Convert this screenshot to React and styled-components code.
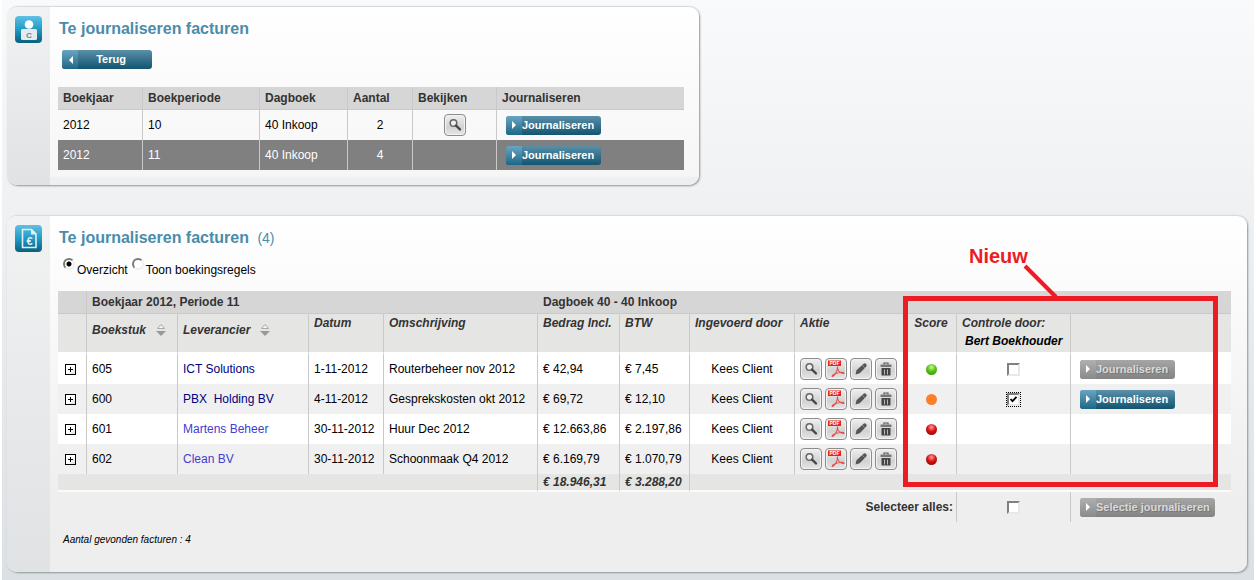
import React from "react";
import styled, { createGlobalStyle, css } from "styled-components";

const GlobalStyle = createGlobalStyle`
  html {
    min-height: 100%;
    background: #fff;
  }

  body {
    margin: 0 2px;
    min-height: 100vh;
    background: linear-gradient(#f9fafb, #eff1f3 35%, #dbe0e4);
    font-family: "Liberation Sans", Arial, sans-serif;
    font-size: 12px;
    line-height: 16px;
    color: #000;
  }
`

const Page = styled.main`
  display: flex;
  flex-direction: column;
  gap: 30px;
  padding: 6px 7px 7px 5px;
`

const Panel = styled.section`
  display: flex;
  box-sizing: border-box;
  max-width: ${props => props.$narrow ? '692px' : 'none'};
  border-top: 1px solid #d9dcdc;
  border-radius: 10px;
  background: ${props => props.$narrow ? 'linear-gradient(#fff, #f6f6f6 95%, #efefef 96%)' : 'linear-gradient(#fff, #fbfbfb 20%, #eee 80%)'};
  box-shadow: 1px 1px 2px #8f9496;
  overflow: hidden;
`

const Side = styled.div`
  flex: none;
  width: 43px;
  box-sizing: border-box;
  padding: 9px 8px;
  background: linear-gradient(#f1f3f3, #e6e8e9 60%, #e0e2e4);

  svg {
    display: block;
  }
`

const Body = styled.div`
  flex: 1;
  min-width: 0;
  padding: ${props => props.$narrow ? '12px 15px 15px 8px' : '12px 16px 24px 8px'};
`

const Title = styled.h2`
  margin: 0 1px;
  font-size: 16px;
  line-height: 20px;
  color: #4a8cab;

  span {
    margin-left: 4px;
    font-size: 14px;
    font-weight: normal;
  }
`

const Toolbar = styled.div`
  display: flex;
  padding: 11px 4px 18px;
`

const Options = styled.div`
  display: flex;
  gap: 4px;
  padding: 10px 5px 13px;

  label {
    display: flex;
    gap: 2px;
  }

  span {
    padding-top: 4px;
  }
`

const Radio = styled.input`
  appearance: none;
  width: 12px;
  height: 12px;
  margin: 0;
  border: 2px solid;
  border-color: #7a7a7a #f0f0f0 #f0f0f0 #7a7a7a;
  border-radius: 50%;
  background: #fff;

  &:checked {
    background: radial-gradient(circle, #000 2px, #fff 3px);
  }
`

const Check = styled.input`
  appearance: none;
  display: block;
  box-sizing: border-box;
  width: 13px;
  height: 13px;
  margin: 0 auto;
  border: 2px solid;
  border-color: #808080 #e8e8e8 #e8e8e8 #808080;
  background: #fff;

  &:checked {
    outline: 1px dotted #000;
    background: #fff url("data:image/svg+xml,%3Csvg xmlns='http://www.w3.org/2000/svg' viewBox='0 0 9 9'%3E%3Cpath d='M1.5 4l2 2.2 4-4.4' fill='none' stroke='%23000' stroke-width='1.8'/%3E%3C/svg%3E");
  }
`

const Button = styled.button`
  display: flex;
  align-items: center;
  width: ${props => props.$width};
  height: 19px;
  padding: 0;
  border: 0;
  border-radius: 3px;
  overflow: hidden;
  background: linear-gradient(#5a8fa9, #13546f);
  color: #fff;
  font: bold 11px/19px "Liberation Sans", Arial, sans-serif;

  ${props => props.disabled && css`
    background: linear-gradient(#a6a6a6, #838383);
    color: #d9d9d9;
    text-shadow: 1px 1px 0 #777;
  `}
`

const Arrow = styled.span`
  display: flex;
  flex: none;
  align-items: center;
  justify-content: center;
  width: 16px;
  height: 19px;
  background: linear-gradient(#6aa5c3, #1c6886);

  ${Button}:disabled & {
    background: linear-gradient(#b0b0b0, #8a8a8a);
  }
`

const Label = styled.span`
  flex: 1;
  text-align: ${props => props.$center ? 'center' : 'left'};
  padding-right: ${props => props.$center ? '8px' : '0'};
  white-space: nowrap;
`

const Table = styled.table`
  width: 100%;
  table-layout: fixed;
  border-collapse: separate;
  border-spacing: 0;

  th, td {
    box-sizing: border-box;
    padding: 0 5px;
    text-align: left;
    white-space: nowrap;
  }

  td:last-child {
    padding-left: 9px;
  }
`

const HeadRow = styled.tr`
  height: 23px;
  background: #d6d6d6;
  color: #333;

  th {
    border-bottom: 1px solid #c9c9c9;
    border-right: ${props => props.$plain ? '0' : '1px solid #c9c9c9'};
  }

  th:first-child {
    border-right: 1px solid #c9c9c9;
  }

  th:last-child {
    border-right: 0;
  }
`

const SubHeadRow = styled.tr`
  height: 40px;
  background: #e5e5e3;
  color: #333;
  font-style: italic;

  th {
    padding-top: 1px;
    vertical-align: top;
    border-right: 1px solid #c9c9c9;
    border-bottom: 2px solid #fff;
  }

  th:nth-child(9), th:last-child {
    border-right: 0;
  }
`

const Sortable = styled.div`
  display: flex;
  align-items: center;
  gap: 10px;
  padding-top: 3px;
  line-height: 24px;
`

const Person = styled.div`
  padding: 2px 3px;
  color: #000;
`

const Row = styled.tr`
  height: 30px;
  background: ${props => props.$active ? '#808080' : props.$odd ? '#f0f0f0' : props.$clear ? 'transparent' : '#fff'};
  color: ${props => props.$active ? '#fff' : '#000'};

  td {
    border-right: 1px solid #c9c9c9;
  }

  td:nth-child(9), td:last-child {
    border-right: 0;
  }
`

const TotalRow = styled.tr`
  height: 18px;
  background: #e5e5e3;
  color: #333;
  font-weight: bold;
  font-style: italic;

  td {
    border-bottom: 2px solid #fafafa;
  }

  td:nth-child(-n+3) {
    border-right: 1px solid #c9c9c9;
  }
`

const SelectRow = styled.tr`
  height: 30px;

  th {
    color: #333;
  }

  && th {
    padding-right: 3px;
    text-align: right;
  }

  th, td:nth-child(2) {
    border-right: 1px solid #c9c9c9;
  }
`

const Center = styled.div`
  display: flex;
  justify-content: center;
`

const Supplier = styled.a`
  color: ${props => props.$visited ? '#000080' : '#4040d0'};
  text-decoration: none;
  white-space: pre;
`

const Expand = styled.button`
  display: block;
  width: 11px;
  height: 11px;
  margin: 0 0 0 2px;
  padding: 0;
  box-sizing: border-box;
  border: 1px solid #000;
  background: linear-gradient(135deg, #fff 50%, #ddd);

  svg {
    display: block;
  }
`

const Actions = styled.div`
  display: flex;
  gap: 3px;
`

const IconButton = styled.button`
  display: flex;
  align-items: center;
  justify-content: center;
  box-sizing: border-box;
  width: 22px;
  height: 22px;
  padding: 0;
  border: 1px solid #8c8c8c;
  border-radius: 4px;
  background: linear-gradient(#efefef, #d2d2d2 60%, #e6e6e6);
  box-shadow: inset 0 0 0 1px #f2f2f2;
`

const dotColors = {
  green: 'radial-gradient(circle at 50% 30%, #c9f59a, #52c410 45%, #2f8a06)',
  orange: '#ff7f27',
  red: 'radial-gradient(circle at 50% 30%, #ff9c9c, #d80f0f 45%, #8a0000)',
}

const Dot = styled.span`
  width: 11px;
  height: 11px;
  border-radius: 50%;
  background: ${props => dotColors[props.$color]};
`

const Wrap = styled.div`
  position: relative;
`

const Highlight = styled.div`
  position: absolute;
  left: 845px;
  right: 13px;
  top: 5px;
  height: 191px;
  box-sizing: border-box;
  border: 5px solid #ed1c24;
  pointer-events: none;
`

const Callout = styled.div`
  position: absolute;
  left: 911px;
  top: -47px;
  color: #ed1c24;
  font-size: 20px;
  font-weight: bold;
  line-height: 24px;
`

const CalloutLine = styled.svg`
  position: absolute;
  left: 960px;
  top: -28px;
`

const Footnote = styled.p`
  margin: 10px 5px 0;
  font-size: 10px;
  font-style: italic;
  line-height: 16px;
`

const IconText = styled.text`
  font-family: "Liberation Sans", Arial, sans-serif;
  font-size: ${props => props.$size};
  font-weight: bold;
  text-anchor: middle;
`

const ClientIcon = () => (
  <svg width="27" height="27" viewBox="0 0 27 27">
    <defs>
      <linearGradient id="tile" x1="0" y1="0" x2="0" y2="1">
        <stop offset="0" stopColor="#62bfe3" />
        <stop offset="0.5" stopColor="#1f9bc6" />
        <stop offset="1" stopColor="#0b5f7e" />
      </linearGradient>
    </defs>
    <rect width="27" height="27" rx="4" fill="url(#tile)" />
    <circle cx="14" cy="8.5" r="4.3" fill="#fff" />
    <rect x="6" y="13" width="16" height="11" rx="1.5" fill="#e6eaec" />
    <IconText x="14" y="22" $size="8px" fill="#3a93b5">C</IconText>
  </svg>
)

const InvoiceIcon = () => (
  <svg width="27" height="27" viewBox="0 0 27 27">
    <rect width="27" height="27" rx="4" fill="url(#tile)" />
    <path d="M7.500 4.500h9l4.500 4.500v13.500h-13.500z" fill="none" stroke="#e4eff3" strokeWidth="1.6" />
    <path d="M16 4.500v5h5z" fill="#e4eff3" />
    <IconText x="14.5" y="19.5" $size="11px" fill="#e4eff3">€</IconText>
  </svg>
)

const ArrowIcon = ({left}) => (
  <svg width="5" height="8" viewBox="0 0 5 8">
    <path d={left ? 'M5 0v8L1 4z' : 'M0 0v8l4-4z'} fill="#fff" />
  </svg>
)

const SortIcon = () => (
  <svg width="10" height="14" viewBox="0 0 10 14">
    <path d="M1.500 5.500L5 1.500l3.500 4z" fill="#f2f2f2" stroke="#999" strokeWidth="0.8" />
    <path d="M0 8h10L5 13z" fill="#999" />
  </svg>
)

const SearchIcon = () => (
  <svg width="14" height="14" viewBox="0 0 14 14">
    <circle cx="5.5" cy="5" r="3.3" fill="#eee" stroke="#666" strokeWidth="1.5" />
    <path d="M8 7.500l4 4" stroke="#444" strokeWidth="2.4" strokeLinecap="round" />
  </svg>
)

const PdfIcon = () => (
  <svg width="18" height="18" viewBox="0 0 18 18">
    <rect x="1" y="0.5" width="13" height="5.5" fill="#e5251d" />
    <IconText x="7.5" y="5.3" $size="5px" fill="#fff">PDF</IconText>
    <path d="M10.500 6.500c.2 3.500-.6 5-1.800 6.800-1.200 1.900-2.700 3.400-3.500 3.200-.6-.8 2-2.700 5-3.500s6.500-.9 6.800.2c-1 .8-4-.6-5.300-2.200-.9-1.200-1.300-2.800-1.200-4.500z" fill="none" stroke="#e0504a" strokeWidth="1.1" />
  </svg>
)

const PencilIcon = () => (
  <svg width="14" height="14" viewBox="0 0 14 14">
    <path d="M1.500 12.500l1-4.200L9.300 2a1.800 1.800 0 0 1 2.800 2.700L5.700 11.300z" fill="#555" />
    <path d="M8.300 3.200l2.500 2.500" stroke="#aaa" strokeWidth="0.8" />
  </svg>
)

const TrashIcon = () => (
  <svg width="12" height="14" viewBox="0 0 12 14">
    <path d="M4 2.500V1h4v1.500" fill="none" stroke="#555" strokeWidth="1.2" />
    <rect x="0.5" y="2.5" width="11" height="2.5" rx="0.5" fill="#777" />
    <path d="M1.500 6h9v7.500h-9z" fill="#444" />
    <path d="M4.500 7.500v5M7.500 7.500v5" stroke="#bbb" />
  </svg>
)

const JournalButton = ({label = 'Journaliseren', width = '95px', disabled}) => (
  <Button type="button" $width={width} disabled={disabled}>
    <Arrow><ArrowIcon /></Arrow>
    <Label>{label}</Label>
  </Button>
)

const periods = [
  {year: 2012, period: 10, book: '40 Inkoop', count: 2, view: true},
  {year: 2012, period: 11, book: '40 Inkoop', count: 4, active: true},
]

const invoices = [
  {id: 605, supplier: 'ICT Solutions', visited: true, date: '1-11-2012', text: 'Routerbeheer nov 2012', amount: '€ 42,94', vat: '€ 7,45', score: 'green', check: true, button: 'disabled'},
  {id: 600, supplier: 'PBX  Holding BV', visited: true, date: '4-11-2012', text: 'Gesprekskosten okt 2012', amount: '€ 69,72', vat: '€ 12,10', score: 'orange', check: true, checked: true, button: 'enabled'},
  {id: 601, supplier: 'Martens Beheer', date: '30-11-2012', text: 'Huur Dec 2012', amount: '€ 12.663,86', vat: '€ 2.197,86', score: 'red'},
  {id: 602, supplier: 'Clean BV', date: '30-11-2012', text: 'Schoonmaak Q4 2012', amount: '€ 6.169,79', vat: '€ 1.070,79', score: 'red'},
]

const Columns = ({widths}) => (
  <colgroup>
    {widths.map((w, i) => <col key={i} width={w} />)}
    <col />
  </colgroup>
)

const PeriodTable = () => (
  <Table>
    <Columns widths={[85, 117, 88, 65, 84]} />
    <thead>
      <HeadRow>
        <th>Boekjaar</th>
        <th>Boekperiode</th>
        <th>Dagboek</th>
        <th>Aantal</th>
        <th>Bekijken</th>
        <th>Journaliseren</th>
      </HeadRow>
    </thead>
    <tbody>
      {periods.map(p => (
        <Row key={p.period} $active={p.active} $clear>
          <td>{p.year}</td>
          <td>{p.period}</td>
          <td>{p.book}</td>
          <td><Center>{p.count}</Center></td>
          <td>
            {p.view && <Center><IconButton type="button" aria-label="Bekijken"><SearchIcon /></IconButton></Center>}
          </td>
          <td><JournalButton /></td>
        </Row>
      ))}
    </tbody>
  </Table>
)

const InvoiceTable = () => (
  <Table>
    <Columns widths={[29, 91, 131, 75, 154, 82, 70, 105, 111, 51, 114]} />
    <thead>
      <HeadRow $plain>
        <th></th>
        <th colSpan="4">Boekjaar 2012, Periode 11</th>
        <th colSpan="7">Dagboek 40 - 40 Inkoop</th>
      </HeadRow>
      <SubHeadRow>
        <th></th>
        <th><Sortable>Boekstuk <SortIcon /></Sortable></th>
        <th><Sortable>Leverancier <SortIcon /></Sortable></th>
        <th>Datum</th>
        <th>Omschrijving</th>
        <th>Bedrag Incl.</th>
        <th>BTW</th>
        <th>Ingevoerd door</th>
        <th>Aktie</th>
        <th><Center>Score</Center></th>
        <th>Controle door:<Person>Bert Boekhouder</Person></th>
        <th></th>
      </SubHeadRow>
    </thead>
    <tbody>
      {invoices.map((inv, i) => (
        <Row key={inv.id} $odd={i % 2 === 1}>
          <td>
            <Expand type="button" aria-label="Uitklappen">
              <svg width="9" height="9" viewBox="0 0 9 9"><path d="M2 4.500h5M4.500 2v5" stroke="#000" /></svg>
            </Expand>
          </td>
          <td>{inv.id}</td>
          <td><Supplier href="#" $visited={inv.visited}>{inv.supplier}</Supplier></td>
          <td>{inv.date}</td>
          <td>{inv.text}</td>
          <td>{inv.amount}</td>
          <td>{inv.vat}</td>
          <td><Center>Kees Client</Center></td>
          <td>
            <Actions>
              <IconButton type="button" aria-label="Bekijken"><SearchIcon /></IconButton>
              <IconButton type="button" aria-label="PDF"><PdfIcon /></IconButton>
              <IconButton type="button" aria-label="Bewerken"><PencilIcon /></IconButton>
              <IconButton type="button" aria-label="Verwijderen"><TrashIcon /></IconButton>
            </Actions>
          </td>
          <td><Center><Dot $color={inv.score} /></Center></td>
          <td>{inv.check && <Check type="checkbox" aria-label="Controle" defaultChecked={inv.checked} />}</td>
          <td>{inv.button && <JournalButton disabled={inv.button === 'disabled'} />}</td>
        </Row>
      ))}
      <TotalRow>
        <td colSpan="5"></td>
        <td>€ 18.946,31</td>
        <td>€ 3.288,20</td>
        <td colSpan="5"></td>
      </TotalRow>
      <SelectRow>
        <th colSpan="10"><label htmlFor="select-all">Selecteer alles:</label></th>
        <td><Check type="checkbox" id="select-all" /></td>
        <td><JournalButton label="Selectie journaliseren" width="135px" disabled /></td>
      </SelectRow>
    </tbody>
  </Table>
)

export default function App() {
  return (
    <>
      <GlobalStyle />
      <Page>
        <Panel $narrow>
          <Side><ClientIcon /></Side>
          <Body $narrow>
            <Title>Te journaliseren facturen</Title>
            <Toolbar>
              <Button type="button" $width="90px">
                <Arrow><ArrowIcon left /></Arrow>
                <Label $center>Terug</Label>
              </Button>
            </Toolbar>
            <PeriodTable />
          </Body>
        </Panel>
        <Panel>
          <Side><InvoiceIcon /></Side>
          <Body>
            <Title>Te journaliseren facturen <span>(4)</span></Title>
            <Options>
              <label><Radio type="radio" name="mode" defaultChecked /><span>Overzicht</span></label>
              <label><Radio type="radio" name="mode" /><span>Toon boekingsregels</span></label>
            </Options>
            <Wrap>
              <InvoiceTable />
              <Highlight />
              <Callout>Nieuw</Callout>
              <CalloutLine width="42" height="36" viewBox="0 0 42 36">
                <path d="M7 3l31 31" stroke="#ed1c24" strokeWidth="4" />
              </CalloutLine>
            </Wrap>
            <Footnote>Aantal gevonden facturen : 4</Footnote>
          </Body>
        </Panel>
      </Page>
    </>
  );
}
